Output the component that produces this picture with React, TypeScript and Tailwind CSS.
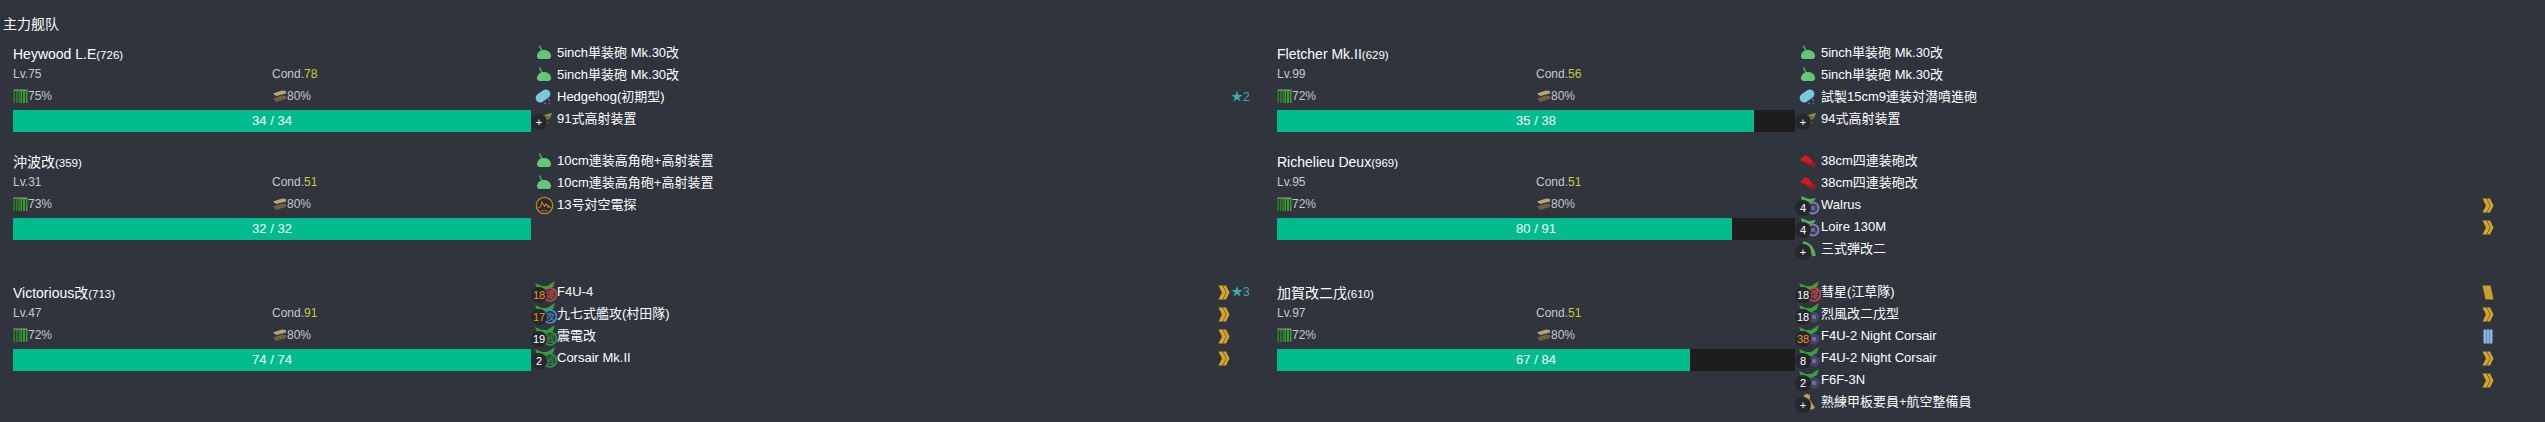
import React from "react";

const FONT = "font-['Liberation_Sans','Noto_Sans_CJK_SC',sans-serif]";

function Gun({ color }: { color: string }) {
  return (
    <svg viewBox="0 0 20 18" className="w-5 h-[18px]">
      <path d="M3 12.500c0-4 3-6.500 7-6.500s7 2.500 7 6.500c0 1.500-1 2.500-2.500 2.500h-9c-1.500 0-2.500-1-2.500-2.500z" fill={color} />
      <path d="M8.500 8L5.500 1.500" stroke={color} strokeWidth="1.500" fill="none" opacity="0.8" />
    </svg>
  );
}

function RedGun() {
  return (
    <svg viewBox="0 0 20 18" className="w-5 h-[18px]">
      <path d="M2 8l5-5 4 2 3 4 5 3-3 4-5-2-3-3z" fill="#8c2028" />
      <path d="M2 8l5-5 4 2 3 4 1 3-5-1-3-1z" fill="#d01c1c" />
    </svg>
  );
}

function Capsule() {
  return (
    <svg viewBox="0 0 20 18" className="w-5 h-[18px]">
      <rect x="1" y="3.500" width="16" height="9" rx="4.500" transform="rotate(-35 9 8)" fill="#78c8de" />
      <circle cx="15" cy="12" r="1" fill="#4a8ca0" />
      <circle cx="11" cy="15.500" r="1" fill="#4a8ca0" />
      <circle cx="15.500" cy="15.500" r="0.800" fill="#4a8ca0" />
    </svg>
  );
}

function AAGun() {
  return (
    <svg viewBox="0 0 20 18" className="w-5 h-[18px]">
      <path d="M4 12c0-4 3-7 6-7l8-2-2 6-3 1 1 4H6z" fill="#75753a" />
      <path d="M11 5l7-2-2 3z" fill="#94944a" />
    </svg>
  );
}

function Radar() {
  return (
    <svg viewBox="0 0 22 22" className="w-[19px] h-[19px]">
      <circle cx="11" cy="11" r="9.500" fill="#2a2b2e" stroke="#c88a2e" strokeWidth="1.400" />
      <path d="M3.500 14l3-2 1.500-5 3 5 2-3 2 4 1-1.500 2 2.500" fill="none" stroke="#c88a2e" strokeWidth="1.200" />
      <path d="M7 17h8" stroke="#c88a2e" strokeWidth="0.800" />
    </svg>
  );
}

function Shell() {
  return (
    <svg viewBox="0 0 20 18" className="w-5 h-[18px]">
      <path d="M5 3Q14 5 16 16" stroke="#5cab5c" strokeWidth="4" fill="none" />
    </svg>
  );
}

function Crew() {
  return (
    <svg viewBox="0 0 20 18" className="w-5 h-[18px]">
      <circle cx="9" cy="4" r="3" fill="#c8a060" />
      <path d="M7 6l4-1 6 10-4 2z" fill="#c8a060" />
    </svg>
  );
}

function Plane({ badge, label }: { badge: string; label?: string }) {
  return (
    <svg viewBox="0 0 26 22" className="w-[26px] h-[22px]">
      <path d="M4 2l7 3h5l8-5-2 6-5 3h-7l-4-2z" fill="#36a03c" />
      {label ? (
        <>
          <circle cx="19" cy="13.500" r="6.500" fill="#33363e" stroke={badge} strokeWidth="1.600" />
          <text x="19" y="17" textAnchor="middle" fontSize="9" fill={badge}>{label}</text>
        </>
      ) : (
        <>
          <circle cx="19" cy="14" r="5.500" fill="#45456a" />
          <rect x="17" y="12" width="4" height="4" rx="1" fill="#6c6ca0" />
        </>
      )}
    </svg>
  );
}

function Seaplane() {
  return (
    <svg viewBox="0 0 26 22" className="w-[26px] h-[22px]">
      <path d="M6 2l8 3 7-1-2 3-6 2-6-2z" fill="#58a868" />
      <circle cx="18" cy="14" r="5.500" fill="#3c3c58" stroke="#7f7fa8" strokeWidth="2" />
      <rect x="16" y="12" width="4" height="4" fill="#6a6a90" />
    </svg>
  );
}

function Fuel() {
  return (
    <svg viewBox="0 0 15 14" className="w-[15px] h-[14px]">
      <rect x="0.500" y="1" width="6.500" height="13" fill="#347a30" />
      <rect x="7.500" y="1" width="7" height="13" fill="#42983a" />
      <path d="M2.500 2v12M5 2v12M9.500 2v12M12.500 2v12" stroke="#1c4420" />
      <path d="M0.500 1h14" stroke="#9a9a90" />
    </svg>
  );
}

function Ammo() {
  return (
    <svg viewBox="0 0 15 13" className="w-[15px] h-[13px]">
      <path d="M1 3.500l9-3 4 0.500v2.500l-10 2.500z" fill="#b8a478" />
      <path d="M1 8.500l9-3 4 0.500v3l-10 3z" fill="#6f6140" />
    </svg>
  );
}

function Chevrons() {
  return (
    <svg viewBox="0 0 12 15" className="w-3 h-[15px]">
      <path d="M0.500 0.500h4l3.500 7-3.500 7h-4l3.500-7z" fill="#d6a52a" />
      <path d="M5 0.500h3l3.500 7-3.500 7H5l3.500-7z" fill="#d6a52a" />
    </svg>
  );
}

function Slashes() {
  return (
    <svg viewBox="0 0 12 15" className="w-3 h-[15px]">
      <path d="M0.500 0.500h8l3 14h-8z" fill="#c99f2c" />
    </svg>
  );
}

function Bars() {
  return (
    <svg viewBox="0 0 12 15" className="w-3 h-[15px]">
      <rect x="1.500" y="0.500" width="9" height="14" fill="#8fb4de" />
      <path d="M4.500 1v13M7.500 1v13" stroke="#5d83b0" />
    </svg>
  );
}

type Equip = {
  icon: React.ReactNode;
  name: string;
  count?: string;
  countColor?: string;
  prof?: React.ReactNode;
  star?: string;
};

type Ship = {
  name: string;
  id: string;
  lv: number;
  cond: number;
  fuel: number;
  hp: number;
  max: number;
  equips: Equip[];
};

const ORANGE = "text-[#f0902a]";
const RED = "#c8484c";
const BLUE = "#3f8ed0";
const GREEN = "#2f9a44";
const PURPLE = "#6a6ab0";

const ships: Ship[] = [
  {
    name: "Heywood L.E", id: "(726)", lv: 75, cond: 78, fuel: 75, hp: 34, max: 34,
    equips: [
      { icon: <Gun color="#62c878" />, name: "5inch単装砲 Mk.30改" },
      { icon: <Gun color="#62c878" />, name: "5inch単装砲 Mk.30改" },
      { icon: <Capsule />, name: "Hedgehog(初期型)", star: "★2" },
      { icon: <AAGun />, name: "91式高射装置", count: "+" },
    ],
  },
  {
    name: "Fletcher Mk.II", id: "(629)", lv: 99, cond: 56, fuel: 72, hp: 35, max: 38,
    equips: [
      { icon: <Gun color="#62c878" />, name: "5inch単装砲 Mk.30改" },
      { icon: <Gun color="#62c878" />, name: "5inch単装砲 Mk.30改" },
      { icon: <Capsule />, name: "試製15cm9連装対潜噴進砲" },
      { icon: <AAGun />, name: "94式高射装置", count: "+" },
    ],
  },
  {
    name: "沖波改", id: "(359)", lv: 31, cond: 51, fuel: 73, hp: 32, max: 32,
    equips: [
      { icon: <Gun color="#62c878" />, name: "10cm連装高角砲+高射装置" },
      { icon: <Gun color="#62c878" />, name: "10cm連装高角砲+高射装置" },
      { icon: <Radar />, name: "13号対空電探" },
    ],
  },
  {
    name: "Richelieu Deux", id: "(969)", lv: 95, cond: 51, fuel: 72, hp: 80, max: 91,
    equips: [
      { icon: <RedGun />, name: "38cm四連装砲改" },
      { icon: <RedGun />, name: "38cm四連装砲改" },
      { icon: <Seaplane />, name: "Walrus", count: "4", prof: <Chevrons /> },
      { icon: <Seaplane />, name: "Loire 130M", count: "4", prof: <Chevrons /> },
      { icon: <Shell />, name: "三式弾改二", count: "+" },
    ],
  },
  {
    name: "Victorious改", id: "(713)", lv: 47, cond: 91, fuel: 72, hp: 74, max: 74,
    equips: [
      { icon: <Plane badge={RED} label="爆" />, name: "F4U-4", count: "18", countColor: ORANGE, prof: <Chevrons />, star: "★3" },
      { icon: <Plane badge={BLUE} label="攻" />, name: "九七式艦攻(村田隊)", count: "17", countColor: ORANGE, prof: <Chevrons /> },
      { icon: <Plane badge={GREEN} label="戦" />, name: "震電改", count: "19", prof: <Chevrons /> },
      { icon: <Plane badge={GREEN} label="戦" />, name: "Corsair Mk.II", count: "2", prof: <Chevrons /> },
    ],
  },
  {
    name: "加賀改二戊", id: "(610)", lv: 97, cond: 51, fuel: 72, hp: 67, max: 84,
    equips: [
      { icon: <Plane badge={RED} label="爆" />, name: "彗星(江草隊)", count: "18", prof: <Slashes /> },
      { icon: <Plane badge={PURPLE} />, name: "烈風改二戊型", count: "18", prof: <Chevrons /> },
      { icon: <Plane badge={PURPLE} />, name: "F4U-2 Night Corsair", count: "38", countColor: ORANGE, prof: <Bars /> },
      { icon: <Plane badge={PURPLE} />, name: "F4U-2 Night Corsair", count: "8", prof: <Chevrons /> },
      { icon: <Plane badge={PURPLE} />, name: "F6F-3N", count: "2", prof: <Chevrons /> },
      { icon: <Crew />, name: "熟練甲板要員+航空整備員", count: "+" },
    ],
  },
];

function EquipRow({ e }: { e: Equip }) {
  return (
    <div className="flex h-[22px] items-center">
      <div className="relative w-[26px] h-[22px] shrink-0 flex items-center justify-center">
        {e.icon}
        {e.count && (
          <span
            className={`absolute left-0 top-[6px] w-[16px] h-[16px] rounded-full bg-[#25272c] text-[11px] leading-[16px] text-center ${e.countColor ?? "text-white"}`}
          >
            {e.count}
          </span>
        )}
      </div>
      <span className="text-[13px] text-white whitespace-nowrap flex-1">{e.name}</span>
      <span className="w-[14px] flex justify-center shrink-0">{e.prof}</span>
      <span className="w-[26px] shrink-0 text-[12px] text-[#3fa9a6] whitespace-nowrap">{e.star}</span>
    </div>
  );
}

function ShipRow({ s }: { s: Ship }) {
  const pct = (s.hp / s.max) * 100;
  return (
    <div className="flex items-start">
      <div className="w-[518px] shrink-0">
        <div className="h-[22px] flex items-baseline text-[14px] text-white leading-[24px]">
          {s.name}
          <span className="text-[11.500px]">{s.id}</span>
        </div>
        <div className="grid grid-cols-2 text-[12px] text-[#c6c8cc] h-[20px] items-center">
          <span>Lv.{s.lv}</span>
          <span>
            Cond.<span className="text-[#c8c83c]">{s.cond}</span>
          </span>
        </div>
        <div className="grid grid-cols-2 text-[12px] text-[#c6c8cc] h-[22px] items-center mt-[1px]">
          <span className="flex items-center"><Fuel />{s.fuel}%</span>
          <span className="flex items-center"><Ammo />80%</span>
        </div>
        <div className="relative mt-[3px] h-[22px] bg-[#1d1d1d]">
          <div className="h-full bg-[#00bc8c]" style={{ width: `${pct}%` }} />
          <div className="absolute inset-0 text-center text-[13px] text-white leading-[22px]">
            {s.hp} / {s.max}
          </div>
        </div>
      </div>
      <div className="flex-1 min-w-0 pr-[20px]">
        {s.equips.map((e, i) => (
          <EquipRow key={i} e={e} />
        ))}
      </div>
    </div>
  );
}

export default function App() {
  return (
    <div className={`${FONT} bg-[#2f343d] w-full h-[422px] overflow-hidden text-white`}>
      <div className="pt-[16px] pl-[3px] h-[42px] text-[14px] leading-[16px]">主力舰队</div>
      <div className="grid grid-cols-[1264px_1264px] grid-rows-[108px_131px_auto] pl-[13px]">
        {ships.map((s, i) => (
          <ShipRow key={i} s={s} />
        ))}
      </div>
    </div>
  );
}
